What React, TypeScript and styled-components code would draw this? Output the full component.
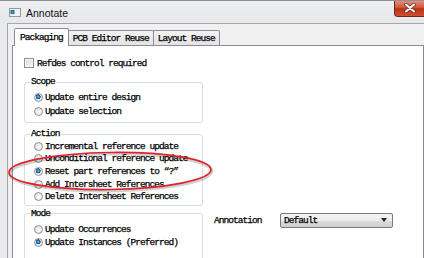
import React from 'react'
import styled, { createGlobalStyle } from 'styled-components'

const GlobalStyle = createGlobalStyle`
	html, body {
		margin: 0;
		padding: 0;
	}
	body {
		background: #ebebeb;
		font-family: "Liberation Mono", "DejaVu Sans Mono", monospace;
	}
`

const Window = styled.div`
	position: relative;
	width: 424px;
	height: 258px;
	overflow: hidden;
	box-sizing: border-box;
	background: #e9eaec;
	border-top: 1px solid #8d9096;
	display: flex;
	flex-direction: column;
`

const TitleBar = styled.div`
	height: 22px;
	flex-shrink: 0;
	display: flex;
	align-items: center;
	padding-left: 9px;
	background: linear-gradient(#eeeff1, #e7e8ea);
`

const Title = styled.span`
	margin-left: 5px;
	font-family: "Liberation Sans", Arial, sans-serif;
	font-size: 10.5px;
	color: #111;
	padding-top: 1px;
`

const CloseButton = styled.div`
	margin-left: auto;
	align-self: flex-start;
	margin-top: -1px;
	width: 30px;
	height: 17px;
	box-sizing: border-box;
	border: 1px solid #6b2a1e;
	border-top: none;
	border-right: none;
	border-bottom-left-radius: 4px;
	background: linear-gradient(#e39683 0%, #d35a40 45%, #bb3216 55%, #cf4f30 100%);
	display: flex;
	align-items: center;
	justify-content: center;
`

const Client = styled.div`
	margin-left: 7px;
	border-left: 1px solid #a3a8ae;
	border-top: 1px solid #a3a8ae;
	background: #f0f0f0;
	padding: 4px 0 0 4px;
	display: flex;
	flex-direction: column;
`

const TabRow = styled.div`
	display: flex;
	align-items: flex-end;
	height: 18px;
	padding-left: 2px;
	margin-bottom: -1px;
	position: relative;
	z-index: 1;
`

const Tab = styled.div<{ $active?: boolean }>`
	box-sizing: border-box;
	height: ${p => (p.$active ? '18px' : '15px')};
	margin-bottom: ${p => (p.$active ? '0' : '1px')};
	margin-left: ${p => (p.$active ? '0' : '-1px')};
	padding: ${p => (p.$active ? '0 5px' : '0 4px')};
	border: 1px solid #898c95;
	border-bottom: none;
	border-radius: 2px 2px 0 0;
	background: ${p => (p.$active ? '#fff' : 'linear-gradient(#f3f3f3, #e3e3e3)')};
	position: relative;
	z-index: ${p => (p.$active ? 2 : 1)};
	display: flex;
	align-items: center;
	font-size: 9.5px;
	letter-spacing: -0.95px;
	-webkit-text-stroke: 0.25px #000;
	color: #000;
	white-space: nowrap;
	padding-top: ${p => (p.$active ? '0' : '1px')};
`

const Panel = styled.div`
	height: 260px;
	background: #fff;
	border: 1px solid #898c95;
	padding: 11px 0 0 11px;
	display: flex;
	flex-direction: column;
	align-items: flex-start;
`

const Label = styled.span`
	font-size: 9.5px;
	letter-spacing: -0.95px;
	-webkit-text-stroke: 0.25px #000;
	color: #000;
	white-space: nowrap;
`

const CheckRow = styled.div`
	height: 12px;
	display: flex;
	align-items: center;
	gap: 3px;
`

const CheckBox = styled.span`
	width: 10px;
	height: 10px;
	box-sizing: border-box;
	border: 1px solid #8e8f8f;
	background: linear-gradient(135deg, #dcdcdc, #f6f6f6);
	box-shadow: inset 0 0 0 1px #f4f4f4;
`

const Group = styled.fieldset<{ $gap: number; $bottom: number }>`
	margin: ${p => p.$gap}px 0 0 0;
	width: 179px;
	box-sizing: border-box;
	border: 1px solid #d5dfe5;
	border-radius: 3px;
	padding: 0 4px ${p => p.$bottom}px 5px;
	min-inline-size: 0;
`

const Legend = styled.legend`
	padding: 0 1px;
	font-size: 9.5px;
	letter-spacing: -0.95px;
	-webkit-text-stroke: 0.25px #000;
	line-height: 12px;
	color: #000;
`

const Option = styled.div<{ $h: number }>`
	height: ${p => p.$h}px;
	display: flex;
	align-items: center;
	gap: 2px;
	padding-left: 4px;
`

const Radio = styled.span<{ $checked?: boolean }>`
	width: 9px;
	height: 9px;
	box-sizing: border-box;
	border-radius: 50%;
	border: 1px solid #8e8f8f;
	background: ${p =>
		p.$checked
			? 'radial-gradient(circle at 45% 40%, #8fd2ff 0, #2a7fcf 1.2px, #174c8c 2.3px, #e9e9e9 2.6px, #f4f4f4 100%)'
			: 'radial-gradient(circle at 60% 60%, #ffffff 0, #e2e2e2 70%, #d0d0d0 100%)'};
	flex-shrink: 0;
`

const BottomRow = styled.div`
	display: flex;
	align-items: flex-start;
`

const Field = styled.div`
	display: flex;
	align-items: center;
	margin: 7px 0 0 11px;
`

const FieldLabel = styled(Label)`
	width: 66px;
`

const Select = styled.div`
	width: 113px;
	height: 15px;
	box-sizing: border-box;
	border: 1px solid #7a7a7a;
	border-radius: 2px;
	background: linear-gradient(#f4f4f4 0%, #ebebeb 50%, #dddddd 51%, #cfcfcf 100%);
	display: flex;
	align-items: center;
	padding: 0 5px 0 3px;
	justify-content: space-between;
`

const Arrow = styled.span`
	width: 0;
	height: 0;
	border-left: 3px solid transparent;
	border-right: 3px solid transparent;
	border-top: 4px solid #222;
`

const Markup = styled.svg`
	position: absolute;
	left: 0;
	top: 0;
	pointer-events: none;
`

const AppIcon = () => (
	<svg width="12" height="9" viewBox="0 0 12 9">
		<rect x="0.5" y="0.5" width="11" height="8" fill="#eef1f4" stroke="#8c99a6" />
		<rect x="1.5" y="2" width="4" height="4" fill="#2d6f8f" />
		<rect x="2.5" y="3" width="2" height="2" fill="#3fa06a" />
	</svg>
)

const CloseGlyph = () => (
	<svg width="12" height="10" viewBox="0 0 12 10">
		<path d="M2 1.5 L10 8.5 M10 1.5 L2 8.5" stroke="#5a2a22" strokeWidth="3.4" strokeLinecap="round" />
		<path d="M2 1.5 L10 8.5 M10 1.5 L2 8.5" stroke="#fff" strokeWidth="2" strokeLinecap="round" />
	</svg>
)

const scope = ['Update entire design', 'Update selection']
const actions = [
	'Incremental reference update',
	'Unconditional reference update',
	'Reset part references to “?”',
	'Add Intersheet References',
	'Delete Intersheet References',
]
const modes = ['Update Occurrences', 'Update Instances (Preferred)']

export default function App() {
	return (
		<>
			<GlobalStyle />
			<Window>
				<TitleBar>
					<AppIcon />
					<Title>Annotate</Title>
					<CloseButton>
						<CloseGlyph />
					</CloseButton>
				</TitleBar>
				<Client>
					<TabRow>
						<Tab $active>Packaging</Tab>
						<Tab>PCB Editor Reuse</Tab>
						<Tab>Layout Reuse</Tab>
					</TabRow>
					<Panel>
						<CheckRow>
							<CheckBox />
							<Label>Refdes control required</Label>
						</CheckRow>
						<Group $gap={7} $bottom={4}>
							<Legend>Scope</Legend>
							<div style={{ height: 2 }} />
							{scope.map((s, i) => (
								<Option key={s} $h={14}>
									<Radio $checked={i === 0} />
									<Label>{s}</Label>
								</Option>
							))}
						</Group>
						<Group $gap={5} $bottom={2}>
							<Legend>Action</Legend>
							{actions.map((s, i) => (
								<Option key={s} $h={12.6}>
									<Radio $checked={i === 2} />
									<Label>{s}</Label>
								</Option>
							))}
						</Group>
						<BottomRow>
							<Group $gap={2} $bottom={20}>
								<Legend>Mode</Legend>
								<div style={{ height: 3 }} />
								{modes.map((s, i) => (
									<Option key={s} $h={13}>
										<Radio $checked={i === 1} />
										<Label>{s}</Label>
									</Option>
								))}
							</Group>
							<Field>
								<FieldLabel>Annotation</FieldLabel>
								<Select>
									<Label>Default</Label>
									<Arrow />
								</Select>
							</Field>
						</BottomRow>
					</Panel>
				</Client>
				<Markup width="424" height="258" viewBox="0 0 424 258">
					<ellipse cx="110" cy="170.5" rx="101" ry="18.5" fill="none" stroke="rgba(0,0,0,0.18)" strokeWidth="3" transform="rotate(-0.8 110 170) translate(0.8 1)" />
					<ellipse cx="110" cy="170" rx="101" ry="18.5" fill="none" stroke="#e3212a" strokeWidth="1.7" transform="rotate(-0.8 110 170)" />
				</Markup>
			</Window>
		</>
	)
}
